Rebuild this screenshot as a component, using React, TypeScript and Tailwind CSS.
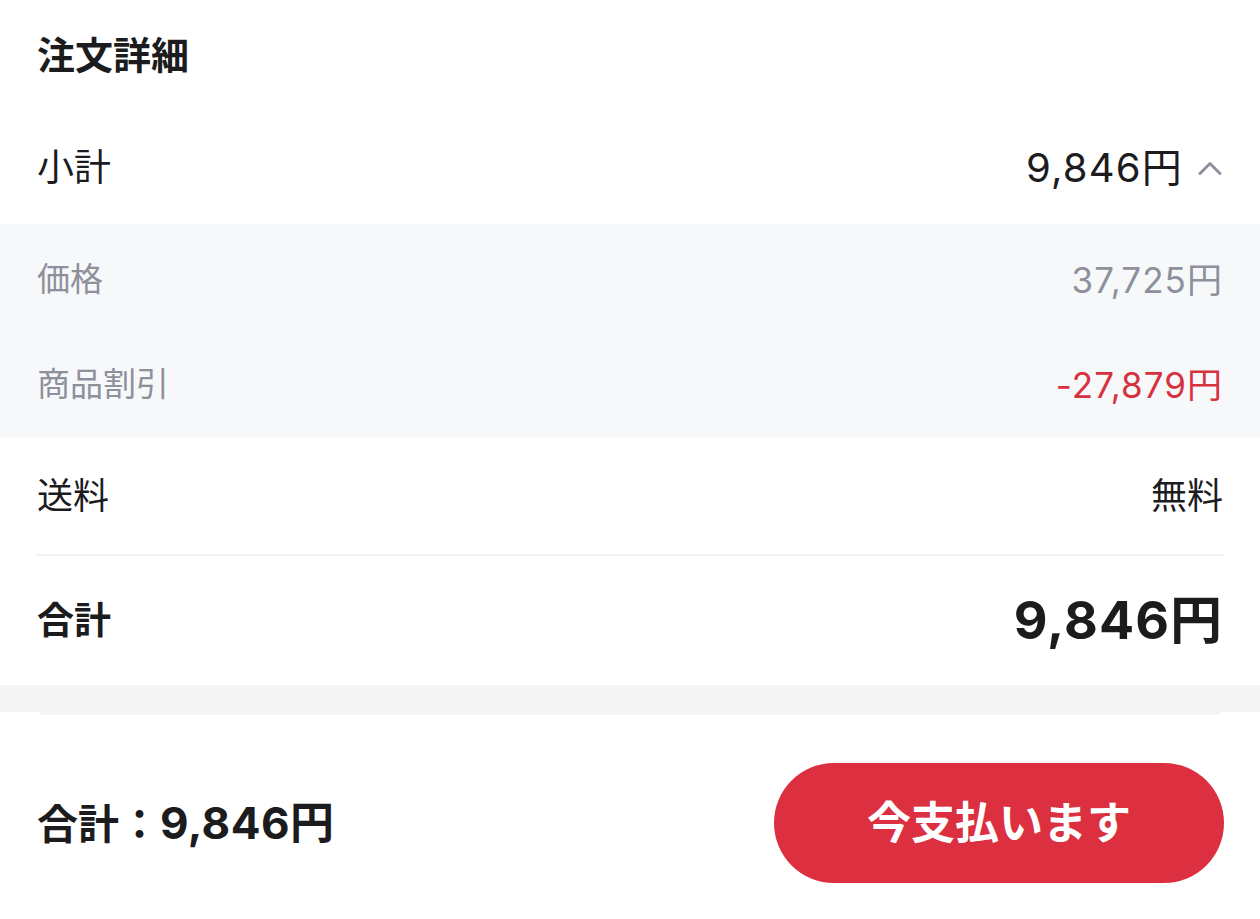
import React from 'react';

const FONT = { fontFamily: 'Inter, "Noto Sans CJK JP", sans-serif' };

function Row({ label, value, className = '', labelClass = '', valueClass = '', children }: { label: string; value?: string; className?: string; labelClass?: string; valueClass?: string; children?: React.ReactNode }) {
  return (
    <div className={`flex items-center justify-between px-[37px] ${className}`}>
      <span className={labelClass}>{label}</span>
      <div className="flex items-center gap-[15px]">
        {value && <span className={valueClass}>{value}</span>}
        {children}
      </div>
    </div>
  );
}

export default function App() {
  return (
    <div className="w-[1260px] h-[919px] bg-white text-[#1c1c1e] overflow-hidden flex flex-col" style={FONT}>
      <div className="h-[112px] flex items-center px-[37px] pb-[2px]">
        <h1 className="text-[38px] font-bold leading-none">注文詳細</h1>
      </div>

      <Row label="小計" value="9,846円" className="h-[112px] text-[37px]" valueClass="text-[40px] tracking-[0.03em]">
        <svg width="24" height="14" viewBox="0 0 24 14" fill="none" className="mr-[1px]">
          <path d="M2 12.5 L12 2.5 L22 12.5" stroke="#8e909c" strokeWidth="3" strokeLinecap="round" strokeLinejoin="round" />
        </svg>
      </Row>

      <div className="bg-[#f7f8fa] h-[214px] flex flex-col text-[33px] text-[#8e909c]">
        <Row label="価格" value="37,725円" className="h-[108px] pt-[4px]" valueClass="text-[35px] tracking-[0.03em]" />
        <Row label="商品割引" value="-27,879円" className="h-[106px]" valueClass="text-[35px] tracking-[0.03em] text-[#d6313f]" />
      </div>

      <Row label="送料" value="無料" className="h-[116px] text-[36px]" />
      <div className="mx-[36px] h-[2px] bg-[#f2f2f2]" />

      <Row label="合計" value="9,846円" className="h-[129px] text-[37px]" labelClass="font-bold" valueClass="text-[52px] font-bold tracking-[0.02em]" />

      <div className="h-[27px] bg-[#f4f4f4]" />
      <div className="mx-[40px] h-[3px] bg-[#f4f4f4]" />

      <div className="flex-1 flex items-center justify-between pl-[37px] pr-[36px] pt-[12px]">
        <span className="font-bold">
          <span className="text-[41px]">合計：</span>
          <span className="text-[44px] tracking-[0.01em]">9,846円</span>
        </span>
        <button className="w-[450px] h-[120px] rounded-full bg-[#dc2f3f] text-white text-[44px] font-bold">今支払います</button>
      </div>
    </div>
  );
}
